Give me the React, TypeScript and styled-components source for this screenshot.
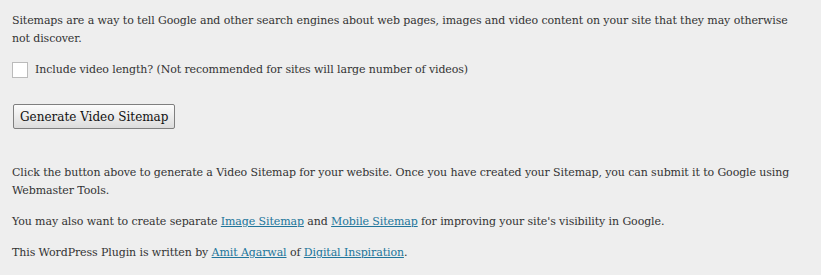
import { createGlobalStyle } from "styled-components";
import styled from "styled-components";

const GlobalStyle = createGlobalStyle`
  html, body {
    margin: 0;
    padding: 0;
    background: #eeeeee;
  }
`;

const S = {
  Wrapper: styled.div`
    padding: 12px 16px 0 12px;
    font-family: Georgia, "DejaVu Serif", serif;
    font-size: 11px;
    letter-spacing: -0.1px;
    line-height: 18px;
    color: #333333;
  `,
  Text: styled.p`
    margin: 0 0 13px 0;
  `,
  CheckRow: styled.label`
    display: flex;
    align-items: center;
    gap: 7px;
    height: 18px;
    margin-bottom: 25px;
  `,
  Box: styled.span`
    display: block;
    width: 14px;
    height: 14px;
    border: 1px solid #bbbbbb;
    background: #ffffff;
  `,
  Button: styled.button`
    display: block;
    height: 25px;
    padding: 0 6px;
    margin: 0 0 35px 1px;
    font-family: Georgia, "DejaVu Serif", serif;
    font-size: 12px;
    color: #111111;
    border: 1px solid #7f7f7f;
    border-radius: 2px;
    background: linear-gradient(#fcfcfc, #dcdcdc);
  `,
  Link: styled.a`
    color: #21759b;
    text-decoration: underline;
  `,
};

const App = () => {
  return (
    <>
      <GlobalStyle />
      <S.Wrapper>
        <S.Text>
          Sitemaps are a way to tell Google and other search engines about web
          pages, images and video content on your site that they may otherwise
          not discover.
        </S.Text>
        <S.CheckRow>
          <S.Box />
          Include video length? (Not recommended for sites will large number of
          videos)
        </S.CheckRow>
        <S.Button>Generate Video Sitemap</S.Button>
        <S.Text>
          Click the button above to generate a Video Sitemap for your website.
          Once you have created your Sitemap, you can submit it to Google using
          Webmaster Tools.
        </S.Text>
        <S.Text>
          You may also want to create separate{" "}
          <S.Link href="#">Image Sitemap</S.Link> and{" "}
          <S.Link href="#">Mobile Sitemap</S.Link> for improving your site's
          visibility in Google.
        </S.Text>
        <S.Text>
          This WordPress Plugin is written by{" "}
          <S.Link href="#">Amit Agarwal</S.Link> of{" "}
          <S.Link href="#">Digital Inspiration</S.Link>.
        </S.Text>
      </S.Wrapper>
    </>
  );
};

export default App;
